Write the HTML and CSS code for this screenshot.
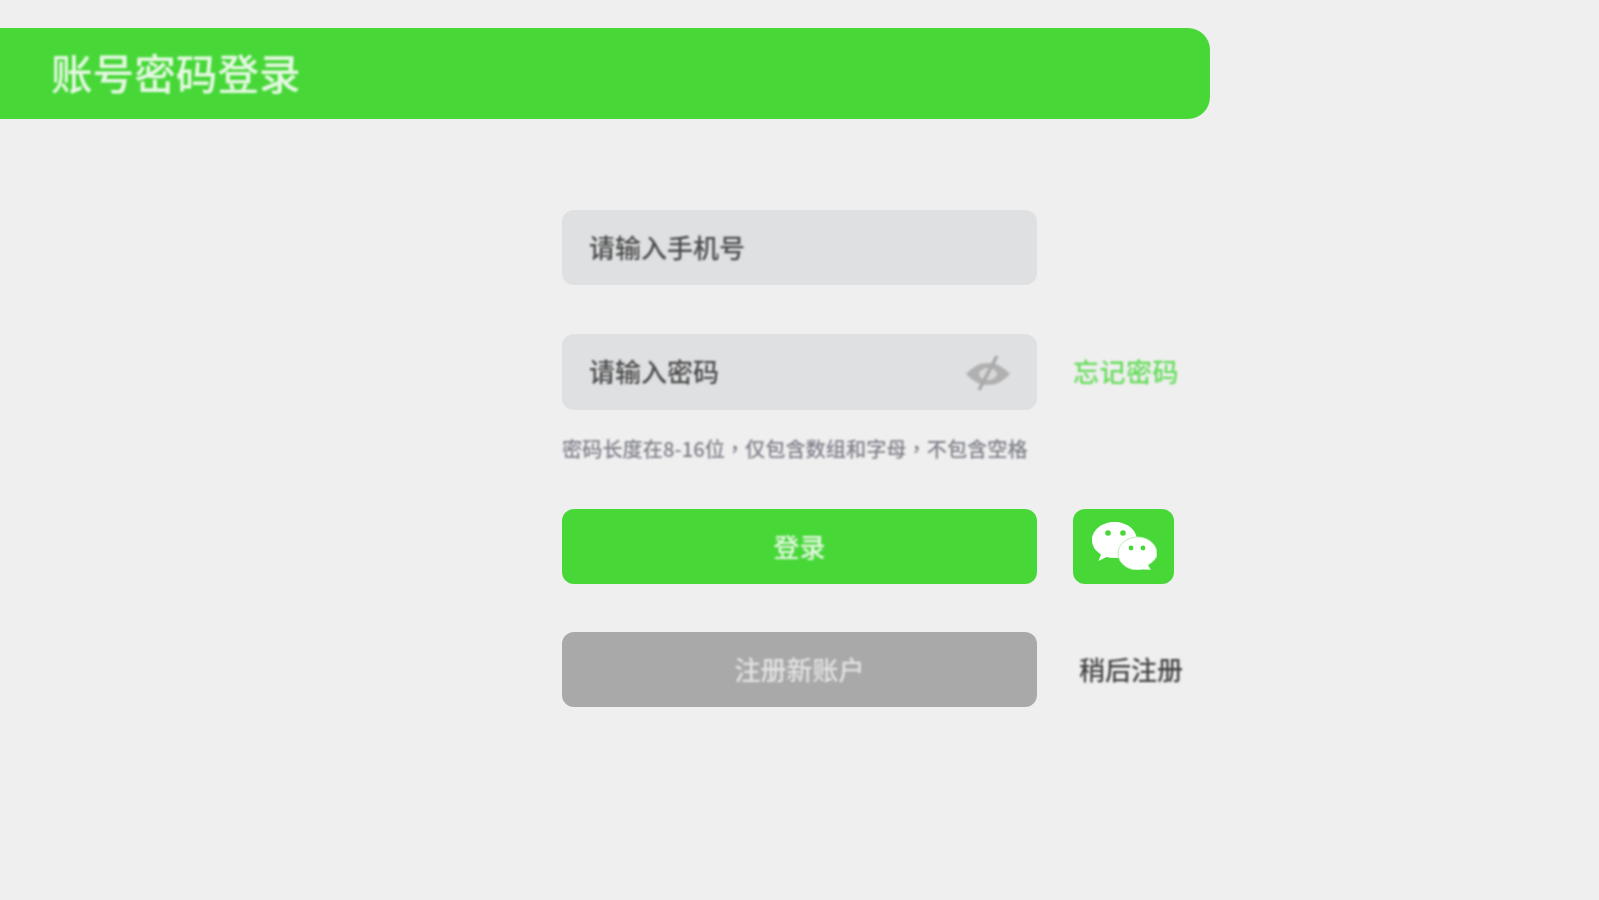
FILE: index.html
```html
<!DOCTYPE html>
<html lang="zh">

<head>
    <meta charset="UTF-8">
    <meta name="viewport" content="width=device-width, initial-scale=1.0">
    <title>账号密码登录</title>
    <link rel="stylesheet" href="styles.css">
</head>

<body>
    <header class="title-bar">
        <h1 class="title-text">账号密码登录</h1>
    </header>

    <main class="login-form">
        <div class="row">
            <div class="field">
                <span class="field-text">请输入手机号</span>
            </div>
        </div>

        <div class="row row-password">
            <div class="field">
                <span class="field-text">请输入密码</span>
                <svg class="eye-icon" viewBox="0 0 46 36">
                    <path fill="#b0b0b0" d="M1 19C9 11 15 8 23 8s14 3 22 11c-8 8-14 11-22 11S9 27 1 19z" />
                    <ellipse fill="#d6d7d9" cx="23" cy="19" rx="9" ry="6" />
                    <path fill="none" stroke="#a9a9a9" stroke-width="3.500" d="M32 1 14 35" />
                </svg>
            </div>
            <a class="side link-green" href="#">忘记密码</a>
        </div>

        <p class="hint" lang="zh-Hant">密码长度在8-16位，仅包含数组和字母，不包含空格</p>

        <div class="row">
            <button class="btn btn-green" type="button"><span class="btn-text">登录</span></button>
            <button class="btn-wechat" type="button" aria-label="微信登录">
                <svg class="wechat-icon" viewBox="0 0 65 48">
                    <path fill="#fff" d="M22.500 0C10 0 0 8 0 18c0 6 3.500 11 9 14.500L6.500 39l8-4c2.500.700 5.200 1 8 1 12.500 0 22.500-8 22.500-18S35 0 22.500 0z" />
                    <path fill="#fff" stroke="#b9eeb2" stroke-width="1" d="M45.500 15C35 15 26 22.400 26 31.500S35 48 45.500 48c2 0 4-.300 6-.800l7 .800-2.500-5c5-3 9-6.500 9-11.500C65 22.400 56 15 45.500 15z" />
                    <circle fill="#47d838" cx="16" cy="11" r="2.800" />
                    <circle fill="#47d838" cx="31" cy="11" r="2.800" />
                    <circle fill="#47d838" cx="39" cy="26" r="2.400" />
                    <circle fill="#47d838" cx="51" cy="26" r="2.400" />
                </svg>
            </button>
        </div>

        <div class="row">
            <button class="btn btn-gray" type="button"><span class="btn-text">注册新账户</span></button>
            <a class="side link-dark" href="#">稍后注册</a>
        </div>
    </main>
</body>

</html>
```

FILE: styles.css
```css
* {
    margin: 0;
    padding: 0;
    box-sizing: border-box;
    font-family: 'Noto Sans CJK SC', 'Liberation Sans', sans-serif;
}

body {
    background-color: #efefef;
    min-height: 100vh;
    padding-top: 28px;
    overflow: hidden;
}

.title-bar {
    width: 1214px;
    height: 91px;
    margin-left: -4px;
    background-color: #47d838;
    border-radius: 0 22px 22px 0;
    display: flex;
    align-items: center;
    padding: 0 0 3px 55px;
    filter: blur(0.7px);
}

.title-text {
    color: #e6f8e3;
    font-size: 41.6px;
    font-weight: 500;
    filter: blur(0.9px);
}

.login-form {
    display: flex;
    flex-direction: column;
    margin-top: 91px;
    margin-left: 562px;
    filter: blur(0.7px);
}

.row {
    display: flex;
    gap: 36px;
    height: 75px;
    margin-bottom: 48px;
}

.row-password {
    height: 76px;
    margin-top: 1px;
    margin-bottom: 0;
}

.field {
    width: 475px;
    background-color: #dfe0e2;
    border-radius: 12px;
    display: flex;
    align-items: center;
    justify-content: space-between;
    padding: 0 26px 0 27px;
}

.field-text {
    color: #4a4a4a;
    font-size: 26px;
    font-weight: 500;
    margin-bottom: 3px;
    filter: blur(1px);
}

.eye-icon {
    width: 46px;
    height: 36px;
    margin-top: 2px;
    filter: blur(1.2px);
}

.side {
    display: flex;
    align-items: center;
    font-size: 26px;
    letter-spacing: 0.5px;
    font-weight: 500;
    text-decoration: none;
    padding-bottom: 4px;
    filter: blur(1px);
}

.link-green {
    color: #63dc58;
}

.link-dark {
    color: #444;
    padding-left: 6px;
    padding-bottom: 3px;
    letter-spacing: 0;
}

.hint {
    height: 99px;
    padding-top: 24px;
    color: #7f808a;
    font-family: 'Noto Sans CJK TC', 'Liberation Sans', sans-serif;
    font-size: 20.2px;
    font-weight: 500;
    line-height: 30px;
    white-space: nowrap;
    filter: blur(1px);
}

.btn {
    width: 475px;
    border: none;
    border-radius: 12px;
    color: #e8f8e6;
    font-size: 26px;
    font-weight: 500;
    padding-bottom: 3px;
}

.btn-text {
    display: inline-block;
    filter: blur(0.8px);
}

.btn-green {
    background-color: #47d838;
}

.btn-wechat {
    width: 101px;
    border: none;
    border-radius: 12px;
    background-color: #47d838;
    display: flex;
    align-items: center;
    justify-content: center;
}

.wechat-icon {
    width: 65px;
    height: 48px;
    margin: 0 0 2px 2px;
}

.btn-gray {
    background-color: #a9a9a9;
    color: #e3e3e3;
}
```
